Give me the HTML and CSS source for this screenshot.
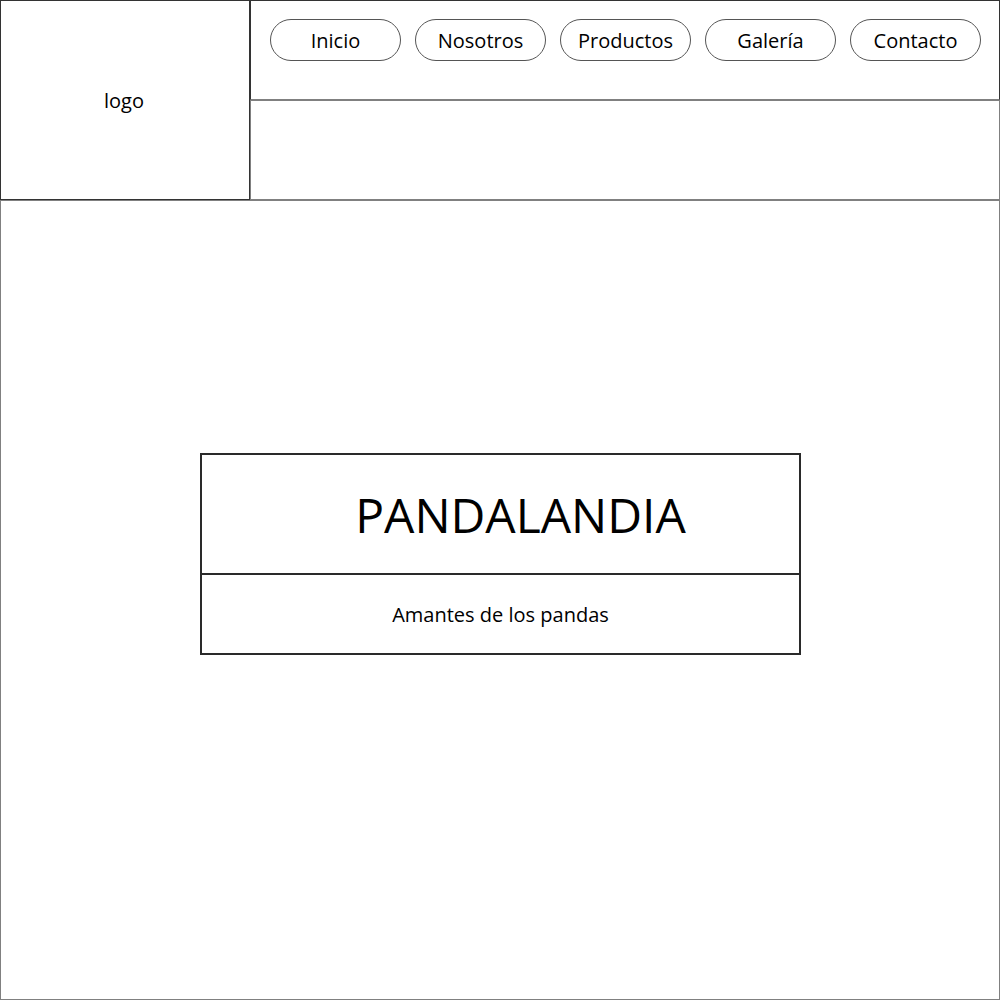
FILE: index.html
```html
<!DOCTYPE html>
<html lang="es">
<head>
<meta charset="utf-8">
<title>Pandalandia</title>
<link rel="stylesheet" href="styles.css">
</head>
<body>
<div class="page">
  <header class="header">
    <div class="logo">logo</div>
    <div class="nav-col">
      <nav class="nav">
        <a class="nav-btn">Inicio</a>
        <a class="nav-btn">Nosotros</a>
        <a class="nav-btn">Productos</a>
        <a class="nav-btn">Galería</a>
        <a class="nav-btn">Contacto</a>
      </nav>
      <div class="sub-bar"></div>
    </div>
  </header>
  <main class="main">
    <section class="hero">
      <div class="hero-title">PANDALANDIA</div>
      <div class="hero-sub">Amantes de los pandas</div>
    </section>
  </main>
</div>
</body>
</html>
```

FILE: styles.css
```css
* { box-sizing: border-box; }
html, body { margin: 0; padding: 0; background: #fff; }
body {
  font-family: "Open Sans", "Noto Sans", sans-serif;
  color: #000;
}
.page {
  width: 1000px;
  height: 1000px;
  display: flex;
  flex-direction: column;
}
.header {
  display: flex;
  height: 200px;
}
.logo {
  width: 250px;
  height: 200px;
  border: 1px solid #333;
  display: flex;
  align-items: center;
  justify-content: center;
  font-size: 20px;
  padding-right: 2px;
}
.nav-col {
  flex: 1;
  display: flex;
  flex-direction: column;
}
.nav {
  height: 100px;
  border: 1px solid #333;
  border-bottom-color: #808080;
  display: flex;
  gap: 14px;
  padding: 18px 0 0 19px;
}
.nav-btn {
  width: 131px;
  height: 42px;
  border: 1px solid #555;
  border-radius: 21px;
  display: flex;
  align-items: center;
  justify-content: center;
  font-size: 20px;
  color: #000;
}
.sub-bar {
  height: 100px;
  border: 1px solid #808080;
}
.main {
  height: 800px;
  border: 1px solid #808080;
  display: flex;
  flex-direction: column;
  align-items: flex-start;
  padding: 252px 0 0 199px;
}
.hero {
  width: 601px;
  border: 2px solid #2a2a2a;
  display: flex;
  flex-direction: column;
}
.hero-title {
  height: 120px;
  border-bottom: 2px solid #2a2a2a;
  display: flex;
  align-items: center;
  justify-content: center;
  padding-left: 40px;
  font-size: 48px;
}
.hero-sub {
  height: 78px;
  display: flex;
  align-items: center;
  justify-content: center;
  font-size: 20px;
}
```
